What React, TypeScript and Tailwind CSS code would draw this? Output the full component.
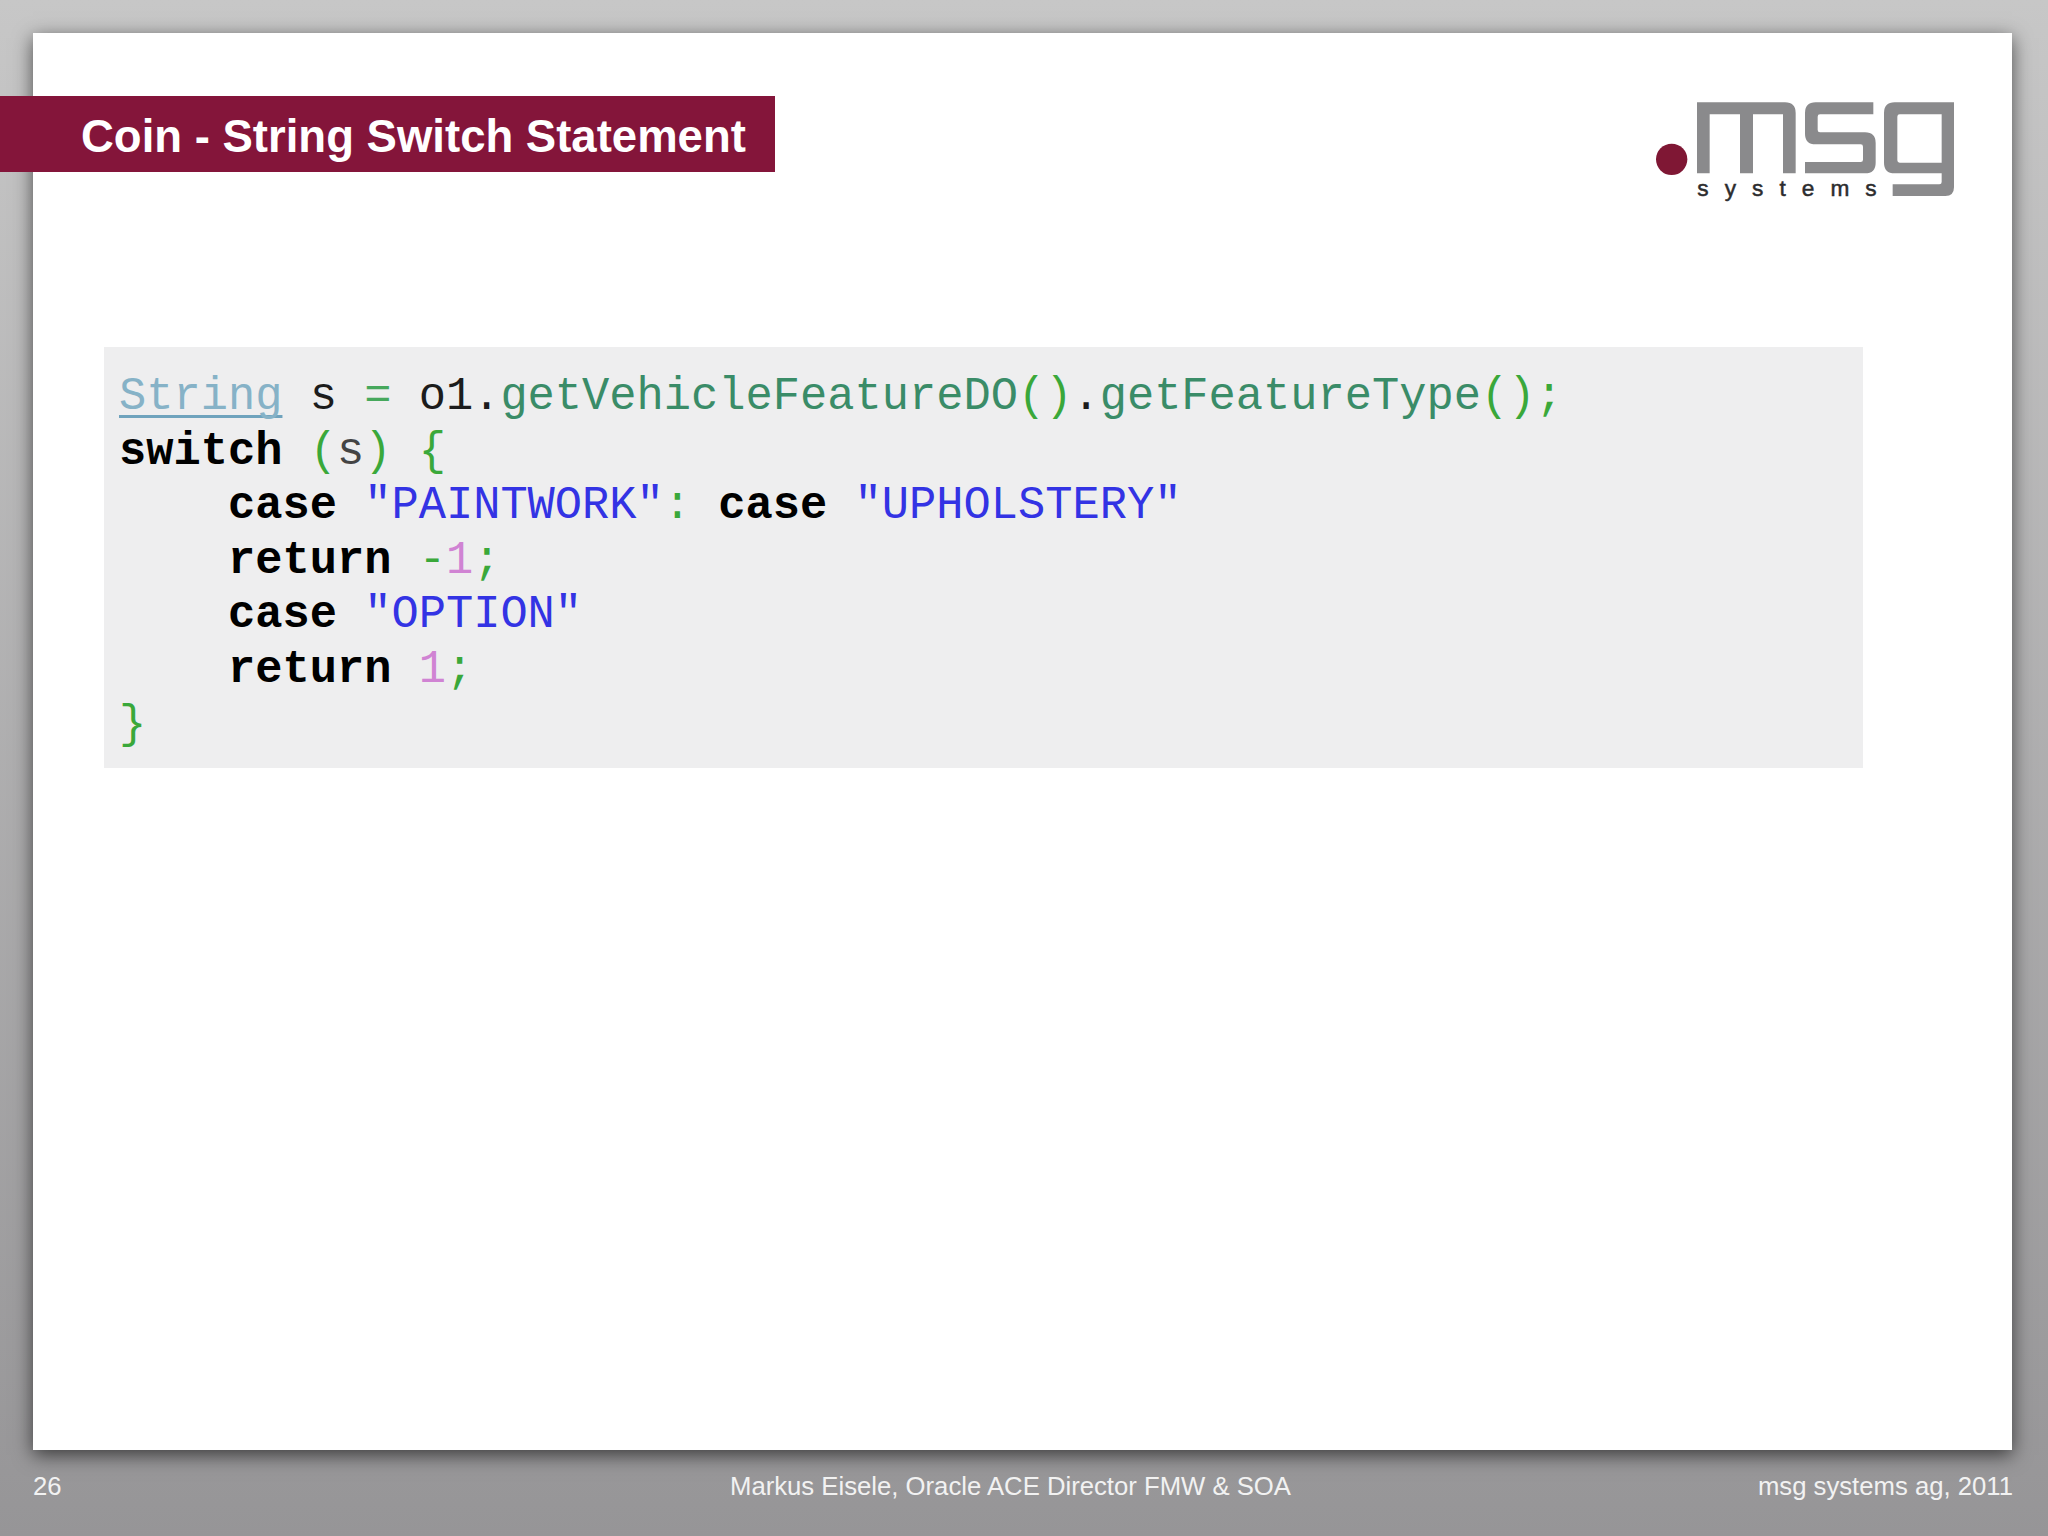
const mono = "font-['Liberation_Mono',monospace]";
export default function App() {
  return (
    <div className="h-[1536px] w-[2048px] overflow-hidden bg-gradient-to-b from-[#c7c7c7] to-[#969597] font-['Liberation_Sans',Arial,sans-serif] flex flex-col">
      <div className="mt-[33px] ml-[33px] w-[1979px] h-[1417px] bg-white shadow-[0_5px_18px_rgba(0,0,0,0.62)] flex flex-col">
        <header className="flex justify-between items-start">
          <div className="mt-[63px] -ml-[33px] w-[775px] h-[76px] bg-[#84153a] flex items-center pl-[81px] pt-[5px]">
            <h1 className="text-white font-bold text-[45.5px] leading-none">Coin - String Switch Statement</h1>
          </div>
          <svg viewBox="0 0 1080 450" className="w-[360px] h-[150px] mt-[37px] mr-[32px]">
            <circle cx="155" cy="268" r="47" fill="#7f1734" />
            <path d="M231 97H495Q527 97 527 129V310H489V133H399V310H360V133H269V310H231Z" fill="#8a8a8c" />
            <path d="M587 97H760V133H600Q593 133 593 140V180Q593 187 600 187H735Q767 187 767 219V278Q767 310 735 310H555V276H722Q729 276 729 269V230Q729 223 722 223H587Q555 223 555 191V129Q555 97 587 97Z" fill="#8a8a8c" />
            <path d="M824 97H1002V352Q1002 378 976 378H818V343H958Q965 343 965 336V310H824Q792 310 792 278V129Q792 97 824 97ZM839 133Q832 133 832 140V271Q832 278 839 278H965V133Z" fill="#8a8a8c" fillRule="evenodd" />
            <text x="232" y="378" textLength="538" fontSize="68" stroke="#2c2c2e" strokeWidth="1.5" fontFamily="Liberation Sans, Arial, sans-serif" fill="#2c2c2e">systems</text>
          </svg>
        </header>
        <pre className={`${mono} mt-[127px] ml-[71px] w-[1759px] h-[421px] bg-[#eeeeef] pl-[15px] pt-[23px] text-[45.4px] leading-[54.6px] text-[#1c1c1c]`}>
          <div><span className="text-[#86b2c7] underline decoration-[#6fa3bd] decoration-[3px] underline-offset-[6px] [text-decoration-skip-ink:none]">String</span><span> s </span><span className="text-[#46a85c]">=</span> o1.<span className="text-[#3a8c68]">getVehicleFeatureDO</span><span className="text-[#3aa83a]">()</span>.<span className="text-[#3a8c68]">getFeatureType</span><span className="text-[#3aa83a]">();</span></div>
          <div><b className="text-black">switch</b> <span className="text-[#3aa83a]">(</span><span className="text-[#444]">s</span><span className="text-[#3aa83a]">)</span> <span className="text-[#3aa83a]">{"{"}</span></div>
          <div>    <b className="text-black">case</b> <span className="text-[#3333e4]">"PAINTWORK"</span><span className="text-[#3aa83a]">:</span> <b className="text-black">case</b> <span className="text-[#3333e4]">"UPHOLSTERY"</span></div>
          <div>    <b className="text-black">return</b> <span className="text-[#3aa83a]">-</span><span className="text-[#d083d3]">1</span><span className="text-[#3aa83a]">;</span></div>
          <div>    <b className="text-black">case</b> <span className="text-[#3333e4]">"OPTION"</span></div>
          <div>    <b className="text-black">return</b> <span className="text-[#d083d3]">1</span><span className="text-[#3aa83a]">;</span></div>
          <div><span className="text-[#3aa83a]">{"}"}</span></div>
        </pre>
      </div>
      <footer className="ml-[33px] w-[1980px] mt-[18px] grid grid-cols-[697px_auto_1fr] text-[25.7px] leading-[36px] text-[#f2f2f2]">
        <span>26</span>
        <span>Markus Eisele, Oracle ACE Director FMW &amp; SOA</span>
        <span className="text-right">msg systems ag, 2011</span>
      </footer>
    </div>
  );
}
